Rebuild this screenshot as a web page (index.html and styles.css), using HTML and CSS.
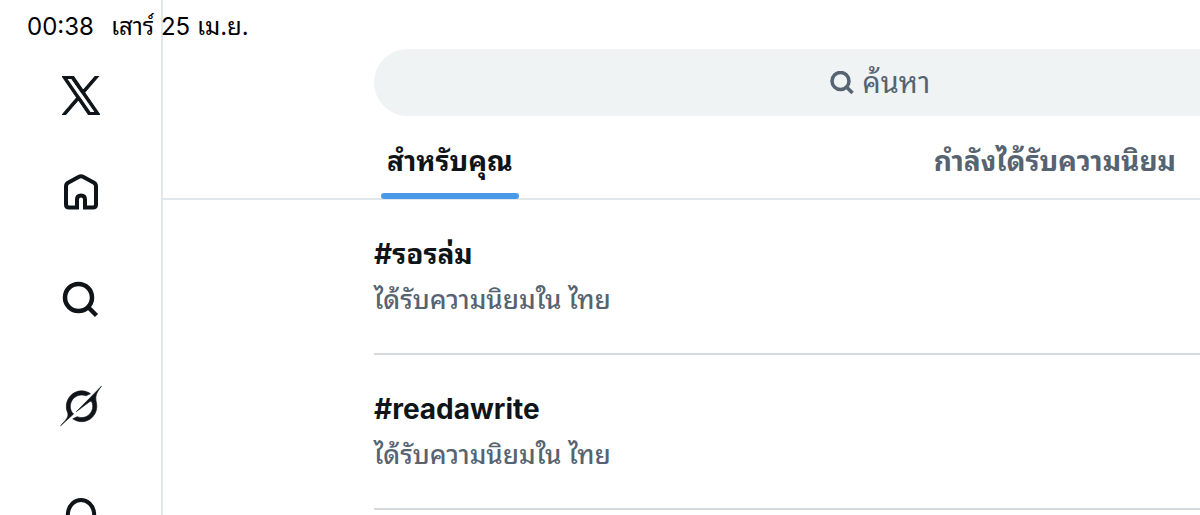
FILE: index.html
```html
<!DOCTYPE html>
<html lang="th">
<head>
    <meta charset="UTF-8">
    <meta name="viewport" content="width=device-width, initial-scale=1.0">
    <title>X</title>
    <link rel="stylesheet" href="styles.css">
</head>
<body>
    <div class="status-bar">
        <span>00:38</span>
        <span>เสาร์ 25 เม.ย.</span>
    </div>

    <div class="app">
        <nav class="sidebar">
            <a href="#" class="logo" aria-label="X">
                <svg viewBox="0 0 1200 1227"><path d="M714.163 519.284L1160.89 0H1055.03L667.137 450.887L357.328 0H0L468.492 681.821L0 1226.37H105.866L515.491 750.218L842.672 1226.37H1200L714.137 519.284H714.163ZM569.165 687.828L521.697 619.934L144.011 79.694H306.615L611.412 515.685L658.88 583.579L1055.08 1150.3H892.476L569.165 687.854V687.828Z"/></svg>
            </a>
            <a href="#" class="nav-link" aria-label="หน้าแรก">
                <svg viewBox="0 0 42 42"><path class="line" d="M17 36.500H9Q6 36.500 6 33.500V15.500Q6 13 8 11.800L19 5.800Q21 4.600 23 5.800L34 11.800Q36 13 36 15.500V33.500Q36 36.500 33 36.500H25V28.500Q25 24.500 21 24.500T17 28.500Z"/></svg>
            </a>
            <a href="#" class="nav-link" aria-label="ค้นหา">
                <svg viewBox="0 0 84 84"><circle class="line thick" cx="37" cy="39" r="27"/><path class="line thick" d="M57 59L73 75"/></svg>
            </a>
            <a href="#" class="nav-link" aria-label="Grok">
                <svg class="grok" viewBox="-0.500 -0.500 34 33"><path d="M12.745 20.54l10.97-8.19c.539-.4 1.307-.244 1.564.38 1.349 3.288.746 7.241-1.938 9.955-2.683 2.714-6.417 3.31-9.83 1.954l-3.728 1.745c5.347 3.697 11.84 2.782 15.898-1.324 3.219-3.255 4.216-7.692 3.284-11.693l.008.009c-1.351-5.878.332-8.227 3.782-13.031L33 0l-4.54 4.59v-.014L12.743 20.544m-2.263 1.987c-3.837-3.707-3.175-9.446.1-12.755 2.42-2.449 6.388-3.448 9.852-1.979l3.72-1.737c-.67-.49-1.53-1.017-2.515-1.387-4.455-1.854-9.789-.931-13.41 2.728-3.483 3.523-4.579 8.94-2.697 13.561 1.405 3.454-.899 5.898-3.22 8.364C1.49 30.2.666 31.074 0 32l10.478-9.466"/></svg>
            </a>
            <a href="#" class="nav-link" aria-label="การแจ้งเตือน">
                <svg viewBox="0 0 42 42"><path class="line" d="M7 33L8 20.500C9 13 14.500 8 21 8S33 13 34 20.500L35 33ZM14 34C15 41 27 41 28 34"/></svg>
            </a>
        </nav>

        <main class="content">
            <form class="search">
                <label for="search" aria-label="ค้นหา">
                    <svg viewBox="0 0 48 48"><circle cx="21" cy="20" r="17"/><path d="M33 32L45 44"/></svg>
                </label>
                <input type="text" id="search" placeholder="ค้นหา">
            </form>

            <nav class="tabs">
                <a href="#" class="tab active">สำหรับคุณ</a>
                <a href="#" class="tab">กำลังได้รับความนิยม</a>
            </nav>

            <div class="trends">
                <a href="#" class="trend">
                    <h2>#รอรล่ม</h2>
                    <p>ได้รับความนิยมใน ไทย</p>
                </a>
                <a href="#" class="trend">
                    <h2>#readawrite</h2>
                    <p>ได้รับความนิยมใน ไทย</p>
                </a>
            </div>
        </main>
    </div>
</body>
</html>
```
FILE: styles.css
```css
* {
    box-sizing: border-box;
}
body {
    margin: 0;
    font-family: Inter, Thonburi, "Noto Sans Thai Looped", Loma, Garuda, "Noto Sans", sans-serif;
    background-color: #fff;
    color: #0f1419;
    overflow: hidden;
}
a {
    color: inherit;
    text-decoration: none;
}
.status-bar {
    position: absolute;
    top: 0;
    left: 27px;
    display: flex;
    gap: 17px;
    font-size: 24px;
    line-height: 54px;
    font-weight: 400;
    color: #000;
}
.app {
    display: flex;
    height: 100vh;
}
.sidebar {
    flex: none;
    width: 163px;
    padding-top: 76px;
    display: flex;
    flex-direction: column;
    align-items: center;
    border-right: 2px solid #e4e7ea;
}
.sidebar svg {
    display: block;
    fill: #0f1419;
}
.logo {
    margin-bottom: 56px;
}
.logo svg {
    width: 38px;
    height: 39px;
    stroke: #0f1419;
    stroke-width: 32;
}
.nav-link {
    flex: none;
    margin-bottom: 65px;
}
.nav-link svg {
    width: 42px;
    height: 42px;
}
.sidebar .line {
    fill: none;
    stroke: #0f1419;
    stroke-width: 4;
}
.sidebar .thick {
    stroke-width: 9;
}
.sidebar .grok {
    stroke: #0f1419;
    stroke-width: 0.5;
}
.content {
    flex: 1;
    min-width: 0;
    padding-top: 49px;
}
.search {
    display: flex;
    align-items: center;
    height: 67px;
    margin-left: 211px;
    padding-left: 44%;
    gap: 8px;
    background-color: #eff3f4;
    border-radius: 34px 0 0 34px;
}
.search svg {
    display: block;
    width: 24px;
    height: 24px;
    fill: none;
    stroke: #566370;
    stroke-width: 7;
}
.search input {
    flex: 1;
    min-width: 0;
    padding: 0;
    border: none;
    outline: none;
    background: none;
    font-family: inherit;
    font-size: 29px;
    color: #0f1419;
}
.search input::placeholder {
    color: #566370;
    opacity: 1;
}
.tabs {
    display: flex;
    justify-content: space-between;
    height: 84px;
    padding: 0 24px 0 218px;
    border-bottom: 2px solid #e1e8ed;
}
.tab {
    display: flex;
    flex-direction: column;
    justify-content: space-between;
    padding-top: 25px;
    font-size: 28px;
    line-height: 40px;
    font-weight: 700;
    color: #566370;
}
.tab.active {
    padding-left: 6px;
    padding-right: 6px;
    margin-bottom: -1px;
    color: #0f1419;
}
.tab.active::after {
    content: "";
    height: 6px;
    margin: 0 -6px;
    border-radius: 3px;
    background-color: #4a99e9;
}
.trends {
    margin-left: 211px;
}
.trend {
    display: block;
    height: 155px;
    padding-top: 32px;
    border-bottom: 2px solid #d5dade;
}
.trend h2 {
    margin: 0;
    font-size: 28px;
    line-height: 44px;
    font-weight: 700;
}
.trend p {
    margin: 0;
    font-size: 26px;
    line-height: 48px;
    font-weight: 500;
    color: #566370;
}
```
